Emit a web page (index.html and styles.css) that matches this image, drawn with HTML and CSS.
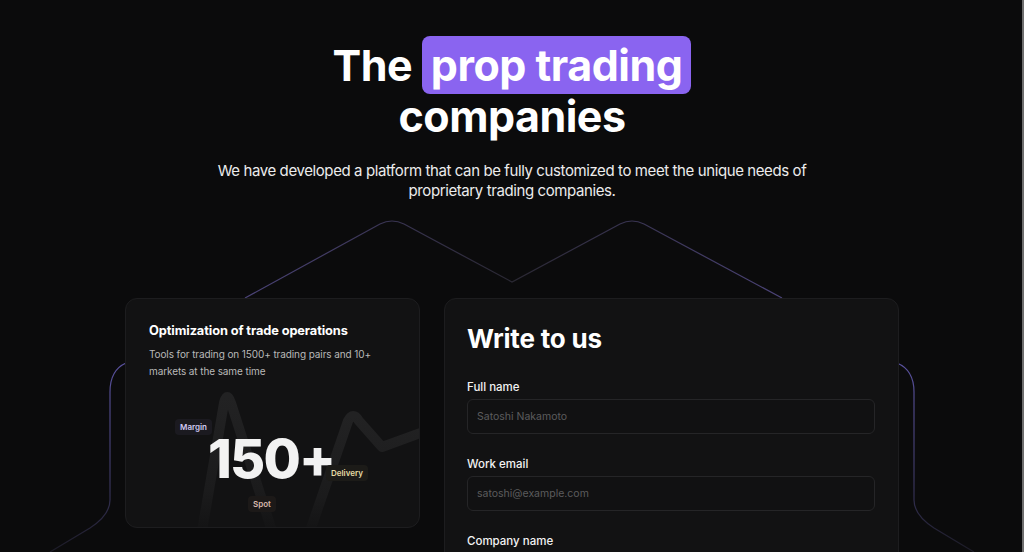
FILE: index.html
```html
<!DOCTYPE html>
<html lang="en">
<head>
<meta charset="utf-8">
<title>Prop trading</title>
<link rel="stylesheet" href="styles.css">
</head>
<body>
<div class="page">
  <svg class="bg-lines" width="1024" height="552" viewBox="0 0 1024 552" aria-hidden="true">
    <defs>
      <linearGradient id="lg" x1="0" y1="0" x2="1" y2="0">
        <stop offset="0" stop-color="#4b4378"/>
        <stop offset="0.5" stop-color="#2a2833"/>
        <stop offset="1" stop-color="#4b4378"/>
      </linearGradient>
      <linearGradient id="lv" x1="0" y1="0" x2="0" y2="1">
        <stop offset="0" stop-color="#5a52a0"/>
        <stop offset="0.6" stop-color="#3a3660"/>
        <stop offset="1" stop-color="#1c1b26"/>
      </linearGradient>
    </defs>
    <path d="M245 298 L380 224 Q392 218 404 224 L512 282 L620 224 Q632 218 644 224 L782 298" fill="none" stroke="url(#lg)" stroke-width="1.2"/>
    <path d="M126 363 Q110 370 110 392 L110 500 Q110 515 90 528 L50 552" fill="none" stroke="url(#lv)" stroke-width="1.2"/>
    <path d="M897 363 Q914 370 914 392 L914 500 Q914 515 934 528 L974 552" fill="none" stroke="url(#lv)" stroke-width="1.2"/>
  </svg>

  <header class="hero">
    <h1 class="title">The <span class="hl">prop trading</span><br>companies</h1>
    <p class="lead">We have developed a platform that can be fully customized to meet the unique needs of proprietary trading companies.</p>
  </header>

  <main class="cards">
    <section class="card feature">
      <h2 class="feature-title">Optimization of trade operations</h2>
      <p class="feature-text">Tools for trading on 1500+ trading pairs and 10+ markets at the same time</p>
      <div class="illus">
        <svg class="wave" width="294" height="140" viewBox="0 0 294 140" aria-hidden="true">
          <defs>
            <linearGradient id="wg" x1="0" y1="0" x2="0" y2="1">
              <stop offset="0" stop-color="#222223"/>
              <stop offset="0.7" stop-color="#1b1b1c"/>
              <stop offset="1" stop-color="#131314"/>
            </linearGradient>
          </defs>
          <path d="M76 142 L98 14 Q101 2 105 14 L146 142" fill="none" stroke="url(#wg)" stroke-width="10" stroke-linecap="round" stroke-linejoin="round"/>
          <path d="M184 142 L222 32 Q227 22 233 32 L256 58 L300 42" fill="none" stroke="url(#wg)" stroke-width="10" stroke-linecap="round" stroke-linejoin="round"/>
        </svg>
        <span class="tag tag-margin">Margin</span>
        <span class="big">150+</span>
        <span class="tag tag-delivery">Delivery</span>
        <span class="tag tag-spot">Spot</span>
      </div>
    </section>

    <section class="card form-card">
      <h2 class="form-title">Write to us</h2>
      <form class="form">
        <label class="field">
          <span class="label">Full name</span>
          <input class="input" type="text" placeholder="Satoshi Nakamoto">
        </label>
        <label class="field">
          <span class="label">Work email</span>
          <input class="input" type="email" placeholder="satoshi@example.com">
        </label>
        <label class="field">
          <span class="label">Company name</span>
          <input class="input" type="text" placeholder="Company">
        </label>
      </form>
    </section>
  </main>
</div>
</body>
</html>
```

FILE: styles.css
```css
* { box-sizing: border-box; }
html, body {
  margin: 0;
  padding: 0;
  background: #0b0b0c;
  overflow: hidden;
}
body {
  font-family: Inter, "Noto Sans", sans-serif;
  color: #fff;
  width: 1024px;
  height: 552px;
}
.page {
  position: relative;
  width: 1024px;
  height: 552px;
  overflow: hidden;
}
.page::after {
  content: "";
  position: absolute;
  right: 0;
  top: 0;
  width: 2px;
  height: 552px;
  background: #6e6e6e;
}
.bg-lines {
  position: absolute;
  left: 0;
  top: 0;
  pointer-events: none;
}
.hero {
  position: relative;
  display: flex;
  flex-direction: column;
  align-items: center;
  padding-top: 40px;
}
.title {
  margin: 0;
  font-size: 43px;
  line-height: 51px;
  font-weight: 700;
  letter-spacing: -0.5px;
  text-align: center;
}
.hl {
  background: #8a64f0;
  border-radius: 8px;
  padding: 3px 9px 3px 9px;
}
.lead {
  margin: 19px 0 0;
  width: 640px;
  font-size: 15px;
  line-height: 20px;
  color: #ececec;
  text-align: center;
  font-weight: 400;
  letter-spacing: -0.4px;
}
.cards {
  position: relative;
  display: flex;
  justify-content: center;
  gap: 24px;
  margin-top: 97px;
}
.card {
  background: #121213;
  border: 1px solid #1d1d1f;
  border-radius: 12px;
}
.feature {
  width: 295px;
  height: 230px;
  padding: 23px 22px 0 23px;
  position: relative;
  overflow: hidden;
}
.feature-title {
  margin: 0;
  font-size: 12.8px;
  line-height: 18px;
  font-weight: 700;
  letter-spacing: -0.1px;
}
.feature-text {
  margin: 6px 0 0;
  font-size: 10px;
  line-height: 17px;
  color: #b9b9b9;
  width: 240px;
  letter-spacing: -0.1px;
}
.illus {
  position: absolute;
  left: 0;
  top: 90px;
  width: 294px;
  height: 140px;
}
.wave {
  position: absolute;
  left: 0;
  top: 0;
}
.big {
  position: absolute;
  left: 82px;
  top: 40px;
  font-size: 54px;
  line-height: 60px;
  font-weight: 800;
  letter-spacing: -1.8px;
  color: #f2f2f2;
}
.tag {
  position: absolute;
  font-size: 8px;
  line-height: 16px;
  font-weight: 600;
  padding: 0 5px;
  border-radius: 4px;
}
.tag-margin {
  left: 49px;
  top: 30px;
  color: #cfc8f0;
  background: #1b1a20;
}
.tag-delivery {
  left: 200px;
  top: 76px;
  color: #e6dba6;
  background: #1c1b18;
}
.tag-spot {
  left: 122px;
  top: 107px;
  color: #d9b9ad;
  background: #1c1918;
}
.form-card {
  width: 455px;
  height: 300px;
  padding: 24px 22px 0 22px;
}
.form-title {
  margin: 0;
  font-size: 26px;
  line-height: 32px;
  font-weight: 700;
  letter-spacing: -0.2px;
}
.form {
  display: flex;
  flex-direction: column;
  gap: 22px;
  margin-top: 24px;
}
.field {
  display: flex;
  flex-direction: column;
  gap: 4px;
}
.label {
  font-size: 11.5px;
  line-height: 16px;
  font-weight: 500;
  color: #f3f3f3;
}
.input {
  height: 35px;
  width: 408px;
  background: #111112;
  border: 1px solid #252527;
  border-radius: 6px;
  padding: 0 9px;
  font-family: inherit;
  font-size: 10.5px;
  color: #ddd;
  outline: none;
}
.input::placeholder { color: #5c5c5d; }
```
